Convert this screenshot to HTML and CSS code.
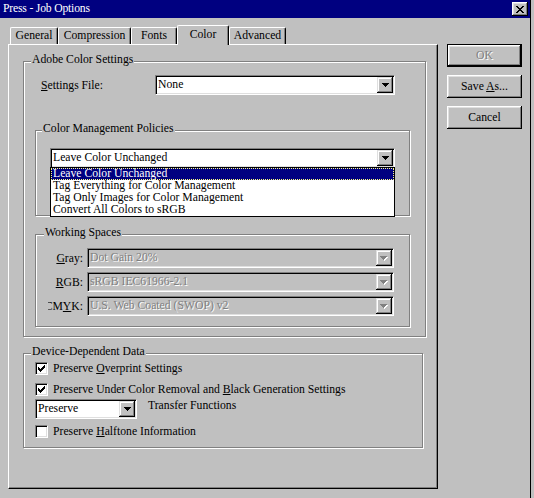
FILE: index.html
```html
<!DOCTYPE html>
<html>
<head>
<meta charset="utf-8">
<title>Press - Job Options</title>
<link rel="stylesheet" href="styles.css">
</head>
<body>
<div class="window">
  <div class="titlebar">
    <span class="title">Press - Job Options</span>
    <span class="close">
      <svg width="8" height="7" viewBox="0 0 8 7" shape-rendering="crispEdges"><path d="M0 0h2v1h-2zM6 0h2v1h-2zM1 1h2v1h-2zM5 1h2v1h-2zM2 2h4v1h-4zM3 3h2v1h-2zM2 4h4v1h-4zM1 5h2v1h-2zM5 5h2v1h-2zM0 6h2v1h-2zM6 6h2v1h-2z" fill="#000"/></svg>
    </span>
  </div>
  <div class="main">
    <div class="left">
      <div class="tabs">
        <div class="tab t-general">General</div>
        <div class="tab t-compression">Compression</div>
        <div class="tab t-fonts">Fonts</div>
        <div class="tab t-color active">Color</div>
        <div class="tab t-advanced">Advanced</div>
      </div>
      <div class="panel">
        <div class="group g-adobe">
          <span class="gtitle">Adobe Color Settings</span>
          <div class="settings-row">
            <span class="settings-label"><u>S</u>ettings File:</span>
            <div class="combo combo-settings">
              <span class="ctext">None</span>
              <span class="cbtn"><svg width="7" height="4" viewBox="0 0 7 4" shape-rendering="crispEdges"><path d="M0 0h7v1h-7zM1 1h5v1h-5zM2 2h3v1h-3zM3 3h1v1h-1z" fill="#000"/></svg></span>
            </div>
          </div>
          <div class="group g-cmp">
            <span class="gtitle t-cmp">Color Management Policies</span>
            <div class="combo combo-policy">
              <span class="ctext">Leave Color Unchanged</span>
              <span class="cbtn"><svg width="7" height="4" viewBox="0 0 7 4" shape-rendering="crispEdges"><path d="M0 0h7v1h-7zM1 1h5v1h-5zM2 2h3v1h-3zM3 3h1v1h-1z" fill="#000"/></svg></span>
              <ul class="droplist">
                <li class="item selected">Leave Color Unchanged</li>
                <li class="item">Tag Everything for Color Management</li>
                <li class="item">Tag Only Images for Color Management</li>
                <li class="item">Convert All Colors to sRGB</li>
              </ul>
            </div>
          </div>
          <div class="group g-ws">
            <span class="gtitle t-ws">Working Spaces</span>
            <div class="ws-row">
              <span class="ws-label"><span><u>G</u>ray:</span></span>
              <div class="combo combo-ws disabled">
                <span class="ctext">Dot Gain 20%</span>
                <span class="cbtn"><svg width="8" height="5" viewBox="0 0 8 5" shape-rendering="crispEdges"><path d="M1 1h7v1h-7zM2 2h5v1h-5zM3 3h3v1h-3zM4 4h1v1h-1z" fill="#fff"/><path d="M0 0h7v1h-7zM1 1h5v1h-5zM2 2h3v1h-3zM3 3h1v1h-1z" fill="#808080"/></svg></span>
              </div>
            </div>
            <div class="ws-row">
              <span class="ws-label"><span><u>R</u>GB:</span></span>
              <div class="combo combo-ws disabled">
                <span class="ctext">sRGB IEC61966-2.1</span>
                <span class="cbtn"><svg width="8" height="5" viewBox="0 0 8 5" shape-rendering="crispEdges"><path d="M1 1h7v1h-7zM2 2h5v1h-5zM3 3h3v1h-3zM4 4h1v1h-1z" fill="#fff"/><path d="M0 0h7v1h-7zM1 1h5v1h-5zM2 2h3v1h-3zM3 3h1v1h-1z" fill="#808080"/></svg></span>
              </div>
            </div>
            <div class="ws-row">
              <span class="ws-label"><span>CM<u>Y</u>K:</span></span>
              <div class="combo combo-ws disabled">
                <span class="ctext">U.S. Web Coated (SWOP) v2</span>
                <span class="cbtn"><svg width="8" height="5" viewBox="0 0 8 5" shape-rendering="crispEdges"><path d="M1 1h7v1h-7zM2 2h5v1h-5zM3 3h3v1h-3zM4 4h1v1h-1z" fill="#fff"/><path d="M0 0h7v1h-7zM1 1h5v1h-5zM2 2h3v1h-3zM3 3h1v1h-1z" fill="#808080"/></svg></span>
              </div>
            </div>
          </div>
        </div>
        <div class="group g-device">
          <span class="gtitle">Device-Dependent Data</span>
          <div class="chk-row r1">
            <span class="chk"><svg width="7" height="7" viewBox="0 0 7 7" shape-rendering="crispEdges"><path d="M6 0h1v1h-1zM5 1h2v1h-2zM0 2h1v1h-1zM4 2h3v1h-3zM0 3h2v1h-2zM3 3h3v1h-3zM0 4h5v1h-5zM1 5h3v1h-3zM2 6h1v1h-1z" fill="#000"/></svg></span>
            <span class="chk-text">Preserve <u>O</u>verprint Settings</span>
          </div>
          <div class="chk-row r2">
            <span class="chk"><svg width="7" height="7" viewBox="0 0 7 7" shape-rendering="crispEdges"><path d="M6 0h1v1h-1zM5 1h2v1h-2zM0 2h1v1h-1zM4 2h3v1h-3zM0 3h2v1h-2zM3 3h3v1h-3zM0 4h5v1h-5zM1 5h3v1h-3zM2 6h1v1h-1z" fill="#000"/></svg></span>
            <span class="chk-text">Preserve Under Color Removal and <u>B</u>lack Generation Settings</span>
          </div>
          <div class="transfer-row">
            <div class="combo combo-transfer">
              <span class="ctext">Preserve</span>
              <span class="cbtn"><svg width="7" height="4" viewBox="0 0 7 4" shape-rendering="crispEdges"><path d="M0 0h7v1h-7zM1 1h5v1h-5zM2 2h3v1h-3zM3 3h1v1h-1z" fill="#000"/></svg></span>
            </div>
            <span class="transfer-text">Transfer Functions</span>
          </div>
          <div class="chk-row r3">
            <span class="chk"></span>
            <span class="chk-text">Preserve <u>H</u>alftone Information</span>
          </div>
        </div>
      </div>
    </div>
    <div class="buttons">
      <div class="btn default disabled"><span>OK</span></div>
      <div class="btn"><span>Save <u>A</u>s...</span></div>
      <div class="btn"><span>Cancel</span></div>
    </div>
  </div>
</div>
</body>
</html>
```

FILE: styles.css
```css
* { box-sizing: border-box; }

body {
  margin: 0;
  width: 534px;
  height: 498px;
  overflow: hidden;
  background: #c0c0c0;
  font-family: "Liberation Serif", "Times New Roman", serif;
  font-size: 11.7px;
  color: #000;
}

.window {
  width: 531px;
  height: 498px;
  background: #c0c0c0;
  border-right: 1px solid #000;
}

.titlebar {
  height: 18px;
  width: 530px;
  background: #000080;
  color: #fff;
  display: flex;
  align-items: center;
  justify-content: space-between;
  padding: 0 2px 0 3px;
  line-height: 18px;
}

.title { letter-spacing: -0.2px; }

.close {
  width: 16px;
  height: 14px;
  background: #c0c0c0;
  display: flex;
  align-items: center;
  justify-content: center;
  box-shadow: inset -1px -1px 0 #000, inset 1px 1px 0 #fff, inset -2px -2px 0 #808080, inset 2px 2px 0 #dfdfdf;
}

.main {
  display: flex;
  padding: 7px 0 0 8px;
}

.left { width: 430px; }

.tabs {
  position: relative;
  z-index: 1;
  display: flex;
  align-items: flex-end;
  height: 19px;
  padding-left: 2px;
}

.tab {
  height: 17px;
  border-top: 1px solid #fff;
  border-left: 1px solid #fff;
  border-right: 1px solid #000;
  border-radius: 2px 2px 0 0;
  box-shadow: inset -1px 0 0 #808080;
  background: #c0c0c0;
  text-align: center;
  line-height: 15px;
  white-space: nowrap;
}

.t-general { width: 48px; }
.t-compression { width: 73px; }
.t-fonts { width: 46px; }
.t-color { width: 52px; }
.t-advanced { width: 57px; }

.tab.active {
  height: 20px;
  margin-bottom: -1px;
  padding-top: 1px;
}

.panel {
  width: 430px;
  height: 445px;
  border-top: 1px solid #fff;
  border-left: 1px solid #fff;
  border-right: 1px solid #000;
  border-bottom: 1px solid #000;
  box-shadow: inset -1px -1px 0 #808080;
  padding: 16px 0 0 14px;
}

.group {
  position: relative;
  border: 1px solid #808080;
  box-shadow: 1px 1px 0 #fff, inset 1px 1px 0 #fff;
}

.gtitle {
  position: absolute;
  top: -8px;
  left: 7px;
  padding: 0 1px;
  background: #c0c0c0;
  line-height: 12px;
  white-space: nowrap;
}

.t-cmp { left: 6px; }
.t-ws { left: 8px; }

.g-adobe {
  width: 403px;
  height: 276px;
  padding-top: 13px;
}

.settings-row {
  display: flex;
  align-items: center;
  height: 20px;
  margin-left: 17px;
}

.settings-label { width: 114px; }

.combo {
  position: relative;
  display: flex;
  align-items: center;
  height: 20px;
  background: #fff;
  border-top: 1px solid #808080;
  border-left: 1px solid #808080;
  border-right: 1px solid #fff;
  border-bottom: 1px solid #fff;
  box-shadow: inset 1px 1px 0 #000, inset -1px -1px 0 #dfdfdf;
  padding: 1px 1px 1px 2px;
}

.combo.disabled {
  background: #c0c0c0;
  color: #808080;
}

.combo.disabled .ctext { text-shadow: 1px 1px 0 #fff; }

.ctext {
  flex: 1;
  white-space: nowrap;
  overflow: hidden;
  line-height: 16px;
}

.cbtn {
  width: 16px;
  height: 16px;
  background: #c0c0c0;
  display: flex;
  align-items: center;
  justify-content: center;
  box-shadow: inset -1px -1px 0 #000, inset 1px 1px 0 #dfdfdf, inset -2px -2px 0 #808080, inset 2px 2px 0 #fff;
}

.combo-settings { width: 240px; }

.g-cmp {
  width: 375px;
  height: 86px;
  margin: 35px 0 0 11px;
  padding: 17px 0 0 14px;
}

.combo-policy { width: 345px; }

.droplist {
  position: absolute;
  z-index: 5;
  left: -1px;
  top: 18px;
  width: 345px;
  height: 50px;
  margin: 0;
  padding: 0;
  list-style: none;
  background: #fff;
  border: 1px solid #000;
}

.item {
  height: 12px;
  line-height: 12px;
  padding-left: 2px;
  white-space: nowrap;
  overflow: hidden;
}

.item.selected {
  background: #000080;
  color: #fff;
  outline: 1px dotted #ffff80;
  outline-offset: -1px;
}

.g-ws {
  width: 375px;
  height: 93px;
  margin: 18px 0 0 11px;
  padding: 13px 0 0 12px;
}

.ws-row {
  display: flex;
  align-items: center;
  height: 20px;
  margin-bottom: 4px;
}

.ws-label {
  width: 35px;
  margin-right: 4px;
  display: flex;
  justify-content: flex-end;
  overflow: hidden;
  white-space: nowrap;
}

.combo-ws { width: 307px; }

.g-device {
  width: 400px;
  height: 95px;
  margin: 16px 0 0 0;
  padding: 8px 0 0 11px;
}

.chk-row {
  display: flex;
  align-items: center;
  height: 13px;
}

.r2 { margin-top: 8px; }
.r3 { margin-top: 6px; }

.chk {
  width: 13px;
  height: 13px;
  flex: none;
  background: #fff;
  border-top: 1px solid #808080;
  border-left: 1px solid #808080;
  border-right: 1px solid #fff;
  border-bottom: 1px solid #fff;
  box-shadow: inset 1px 1px 0 #000, inset -1px -1px 0 #dfdfdf;
  display: flex;
  align-items: center;
  justify-content: center;
}

.chk-text {
  margin-left: 5px;
  white-space: nowrap;
}

.transfer-row {
  display: flex;
  align-items: flex-start;
  margin-top: 3px;
}

.combo-transfer { width: 102px; }

.transfer-text {
  margin: 1px 0 0 11px;
  line-height: 12px;
}

.buttons {
  margin-left: 9px;
  padding-top: 19px;
  display: flex;
  flex-direction: column;
  gap: 8px;
}

.btn {
  width: 75px;
  height: 23px;
  display: flex;
  align-items: center;
  justify-content: center;
  box-shadow: inset -1px -1px 0 #000, inset 1px 1px 0 #fff, inset -2px -2px 0 #808080, inset 2px 2px 0 #dfdfdf;
  white-space: nowrap;
}

.btn.default {
  border: 1px solid #000;
}

.btn.disabled {
  color: #808080;
  text-shadow: 1px 1px 0 #fff;
}
```
